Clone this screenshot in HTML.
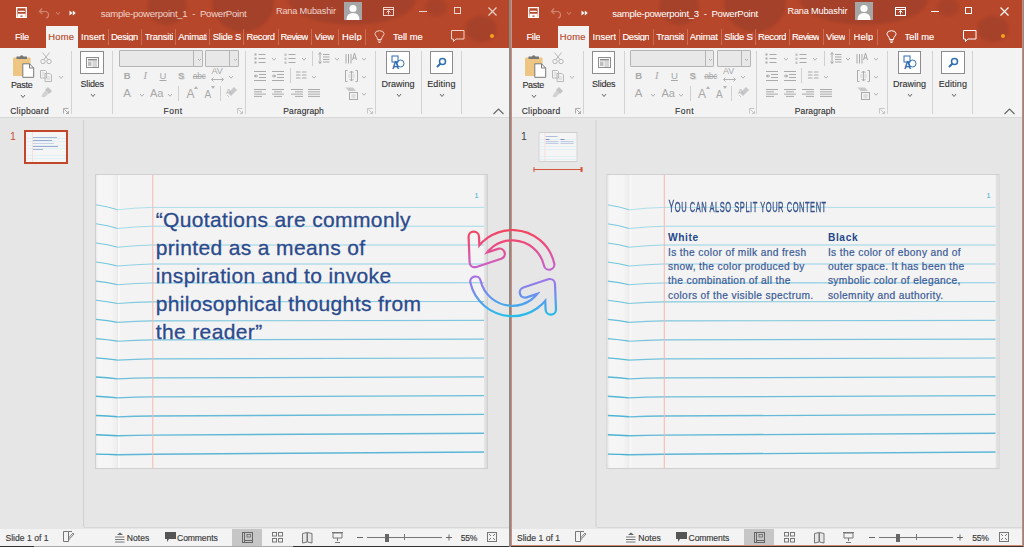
<!DOCTYPE html><html><head><meta charset="utf-8"><style>
*{margin:0;padding:0;box-sizing:border-box}
html,body{width:1024px;height:547px;overflow:hidden;background:#2f3430;position:relative;font-family:"Liberation Sans",sans-serif}
.win{position:absolute;top:0;height:546px;overflow:hidden;background:#e6e6e6}
.a{position:absolute;overflow:visible}
.bar{position:absolute}
.t{position:absolute;white-space:nowrap;line-height:1}
.tb{position:absolute;left:0;top:0;width:100%;height:48px;background:#b7472a;overflow:hidden}
.blob{position:absolute;background:#a1402a;filter:blur(1.5px)}
.ttl{font-size:10px;letter-spacing:-0.1px}
.avatar{position:absolute;left:343.8px;top:2px;width:18px;height:18px;background:#a6a6a6;overflow:hidden}
.avatar svg{position:absolute;left:0;top:0}
.hometab{position:absolute;left:46px;top:25.5px;width:31.5px;height:23px;background:#f3f3f3}
.tab{color:#fff;overflow:hidden;-webkit-text-stroke:0.15px #fff}
.tab.home{color:#b7472a;-webkit-text-stroke:0.15px #b7472a}
.tsep{position:absolute;top:28.5px;width:1px;height:16px;background:#c96c52}
.rb{position:absolute;left:0;top:48px;width:100%;height:69px;background:#f3f3f3}
.rb>*{margin-top:-48px}
.rl{color:#2e2e2e;-webkit-text-stroke:0.1px #2e2e2e}
.ic{font-size:11px;color:#a8a8a8}
.gsep{position:absolute;top:51px;width:1px;height:63px;background:#d3d3d3}
.ibox{position:absolute;background:#fff;border:1px solid #8c8c8c}
.fbox{position:absolute;background:#e8e8e8;border:1px solid #b5b5b5;border-radius:1px}
.ws{position:absolute;left:0;top:117px;width:100%;height:412px;background:#e6e6e6}
.ws>*{margin-top:-117px}
.psep{position:absolute;left:83px;top:120px;width:1px;height:407px;background:#d0d0d0}
.wsb{position:absolute;left:84px;top:527px;width:100%;height:1px;background:#d8d8d8}
.sb{position:absolute;left:0;top:529px;width:100%;height:17px;background:#f3f3f3}
.sb>*{margin-top:-529px}
.st{color:#3a3a3a;-webkit-text-stroke:0.15px #3a3a3a}
.slide{position:absolute;background:#f3f3f3;overflow:hidden;box-shadow:0 0 0 1px #d0d0d0}
.fold{position:absolute;left:0;top:0;width:22px;height:100%;background:linear-gradient(90deg,#ebebeb,#f6f6f6 12%,#f5f5f5 70%,#ededed 96%,#e6e6e6)}
.foldr{position:absolute;left:22px;top:0;width:2px;height:100%;background:#f8f8f8}
.redge{position:absolute;right:0;top:0;width:3px;height:100%;background:linear-gradient(90deg,#e8e8e8,#d9d9d9)}
.snum{font-size:7px;color:#74bfd8;font-weight:bold}
.q{color:#2b4a8c;-webkit-text-stroke:0.3px #2b4a8c}
.h2t{color:#34528a;transform:scaleX(0.5);transform-origin:0 0;-webkit-text-stroke:0.35px #34528a}
.col{color:#3a5a96;-webkit-text-stroke:0.2px #3a5a96}
.colh{color:#23478c;font-weight:bold}
.thumb1{position:absolute;left:24px;top:130px;width:43.5px;height:34px;border:2px solid #c2472a;background:#f5f5f5}
.thumb2{position:absolute;left:26px;top:132px;width:39px;height:30px;border:1px solid #cfcfcf;background:#f5f5f5}
.tin{position:absolute;left:0;top:0;width:100%;height:100%;background:repeating-linear-gradient(180deg,transparent 0 2.6px,#e0f0f4 2.6px 3.4px)}
.insline{position:absolute;left:21px;top:169px;width:49px;height:1.3px;background:#d4553a}
.insline:before,.insline:after{content:"";position:absolute;top:-2px;width:1.3px;height:5px;background:#d4553a}
.insline:before{left:0}.insline:after{right:0}
.pnum{font-size:10.5px}
</style></head><body>
<div class="win" style="left:0px;width:509px">
<div class="tb">
<div class="blob" style="left:147px;top:-13px;width:40px;height:38px;border-radius:50%;opacity:0.75"></div>
<div class="blob" style="left:212px;top:-28px;width:62px;height:60px;border-radius:50%;opacity:0.85"></div>
<div class="blob" style="left:288px;top:-25px;width:128px;height:50px;border-radius:50%;opacity:0.8"></div>
<div class="blob" style="left:425px;top:-3px;width:22px;height:20px;border-radius:50%;opacity:0.6"></div>
<div class="blob" style="left:465px;top:16px;width:32px;height:26px;border-radius:50%;opacity:0.75"></div>
<svg class="a" style="left:16.3px;top:7.4px" width="11" height="11"><path d="M0.7 0.7 H10.3 V10.3 H0.7 Z M2.2 4.3 H8.8" fill="none" stroke="#fff" stroke-width="1.3"/><path d="M1.5 6.8 H9.5 V10 H6.6 V8.4 H4.4 V10 H1.5 Z" fill="#fff"/></svg>
<svg class="a" style="left:38px;top:7px" width="12" height="12"><path d="M4 1.5 L1.5 4.5 L4.5 7 M1.8 4.5 H7 Q10.5 4.5 10.5 8 Q10.5 10.5 8 11" fill="none" stroke="rgba(255,255,255,.35)" stroke-width="1.2"/></svg>
<svg class="a" style="left:54.5px;top:11px" width="6" height="4.5"><path d="M1 1 L3.0 3.5 L5 1" fill="none" stroke="rgba(255,255,255,.35)" stroke-width="1"/></svg>
<svg class="a" style="left:69px;top:10px" width="8" height="6"><path d="M0.5 0.5 L3.5 3 L0.5 5.5 Z M3.8 0.5 L6.8 3 L3.8 5.5 Z" fill="#fff"/></svg>
<div id="w0_0" class="t ttl" style="left:100.70px;top:8.67px;font-size:9.6px;letter-spacing:-0.262px;color:#f0d3ca">sample-powerpoint_1&nbsp; - &nbsp;PowerPoint</div>
<div id="w0_1" class="t ttl" style="left:276.00px;top:7.01px;font-size:9.2px;letter-spacing:-0.192px;color:#f0d3ca">Rana Mubashir</div>
<div class="avatar"><svg width="18" height="18"><circle cx="9" cy="6.5" r="3.6" fill="#fff"/><path d="M2.5 18 Q2.5 11 9 11 Q15.5 11 15.5 18 Z" fill="#fff"/></svg></div>
<svg class="a" style="left:383px;top:7px" width="11" height="9"><rect x="0.5" y="0.5" width="10" height="8" fill="none" stroke="#f0d3ca" stroke-width="1"/><path d="M0.5 2.5 H10.5 M5.5 7.5 V3.5 M3.5 5.5 L5.5 3.5 L7.5 5.5" fill="none" stroke="#f0d3ca" stroke-width="1"/></svg>
<div class="bar" style="left:419px;top:11px;width:8px;height:1px;background:#f0d3ca"></div>
<div class="bar" style="left:453.5px;top:7px;width:7px;height:7px;border:1px solid #f0d3ca"></div>
<svg class="a" style="left:488px;top:7px" width="9" height="9"><path d="M0.5 0.5 L8.5 8.5 M8.5 0.5 L0.5 8.5" stroke="#f0d3ca" stroke-width="1.1"/></svg>
<div class="hometab"></div>
<div id="w0_2" class="t tab" style="left:14.90px;top:31.94px;font-size:9.4px;letter-spacing:-0.270px;">File</div>
<div id="w0_3" class="t tab home" style="left:48.20px;top:31.94px;font-size:9.4px;letter-spacing:0.295px;">Home</div>
<div id="w0_4" class="t tab" style="left:81.10px;top:31.94px;font-size:9.4px;letter-spacing:0.009px;">Insert</div>
<div id="w0_5" class="t tab" style="left:110.90px;top:31.94px;font-size:9.4px;letter-spacing:-0.358px;">Design</div>
<div id="w0_6" class="t tab" style="left:144.70px;top:31.94px;font-size:9.4px;letter-spacing:-0.210px;width:28.3px">Transitions</div>
<div id="w0_7" class="t tab" style="left:178.30px;top:31.94px;font-size:9.4px;letter-spacing:-0.210px;width:28.6px">Animations</div>
<div id="w0_8" class="t tab" style="left:212.80px;top:31.94px;font-size:9.4px;letter-spacing:-0.210px;width:28.3px">Slide Show</div>
<div id="w0_9" class="t tab" style="left:246.60px;top:31.94px;font-size:9.4px;letter-spacing:-0.367px;">Record</div>
<div id="w0_10" class="t tab" style="left:280.60px;top:31.94px;font-size:9.4px;letter-spacing:-0.590px;">Review</div>
<div id="w0_11" class="t tab" style="left:314.60px;top:31.94px;font-size:9.4px;letter-spacing:-0.219px;">View</div>
<div id="w0_12" class="t tab" style="left:342.10px;top:31.94px;font-size:9.4px;letter-spacing:0.135px;">Help</div>
<div id="w0_13" class="t tab" style="left:393.10px;top:31.94px;font-size:9.4px;letter-spacing:-0.017px;">Tell me</div>
<div class="tsep" style="left:107.5px"></div>
<div class="tsep" style="left:141.3px"></div>
<div class="tsep" style="left:175.0px"></div>
<div class="tsep" style="left:209.0px"></div>
<div class="tsep" style="left:243.2px"></div>
<div class="tsep" style="left:277.5px"></div>
<div class="tsep" style="left:311.2px"></div>
<div class="tsep" style="left:337.9px"></div>
<div class="tsep" style="left:365.1px"></div>
<svg class="a" style="left:374px;top:30px" width="11" height="13"><path d="M3.5 9.5 Q3.5 7.5 2 6 Q0.8 4.6 1 3.5 Q1.5 0.7 5.5 0.7 Q9.5 0.7 10 3.5 Q10.2 4.6 9 6 Q7.5 7.5 7.5 9.5 Z M3.8 11 H7.2 M4.5 12.5 H6.5" fill="none" stroke="#f0d3ca" stroke-width="1"/></svg>
<svg class="a" style="left:451px;top:30px" width="14" height="13"><path d="M0.5 0.5 H13 V9 H5 L2.5 11.5 V9 H0.5 Z" fill="none" stroke="#f0d3ca" stroke-width="1"/></svg>
<div class="bar" style="left:489.5px;top:33.5px;width:4px;height:4px;border-radius:2px;background:#f7a21b"></div>
</div>
<div class="rb">
<svg class="a" style="left:12px;top:53px" width="24" height="25"><rect x="1" y="4.5" width="17.5" height="18.5" rx="1" fill="#ecc682"/><path d="M4.5 6 H15 V3.5 H11.5 Q9.75 0.8 8 3.5 H4.5 Z" fill="#767676"/><path d="M10.8 10.8 H17.5 L21.7 15 V24.3 H10.8 Z" fill="#fff" stroke="#7a7a7a" stroke-width="1"/><path d="M17.5 10.8 V15 H21.7" fill="none" stroke="#7a7a7a" stroke-width="1"/></svg>
<div id="w0_14" class="t rl" style="left:10.90px;top:80.58px;font-size:9.0px;letter-spacing:-0.304px;">Paste</div>
<svg class="a" style="left:19.5px;top:93.5px" width="6" height="4.5"><path d="M1 1 L3.0 3.5 L5 1" fill="none" stroke="#666" stroke-width="1"/></svg>
<svg class="a" style="left:40px;top:52px" width="12" height="13"><circle cx="3" cy="9.5" r="2.2" fill="none" stroke="#b8b8b8" stroke-width="1"/><circle cx="9" cy="9.5" r="2.2" fill="none" stroke="#b8b8b8" stroke-width="1"/><path d="M4 7.5 L9.5 0.5 M8 7.5 L2.5 0.5" stroke="#b8b8b8" stroke-width="1"/></svg>
<svg class="a" style="left:40px;top:70px" width="12" height="12"><path d="M0.5 0.5 H5.5 L6.5 1.5 V8 H0.5 Z M5 3.5 H10 L11.5 5 V11.5 H5 Z" fill="#f3f3f3" stroke="#b8b8b8" stroke-width="1"/><path d="M2 3 H4.5 M2 5 H4.5 M6.5 7 H10 M6.5 9 H10" stroke="#c8c8c8" stroke-width=".8"/></svg>
<svg class="a" style="left:57.5px;top:75px" width="6" height="4.5"><path d="M1 1 L3.0 3.5 L5 1" fill="none" stroke="#b8b8b8" stroke-width="1"/></svg>
<svg class="a" style="left:40.5px;top:86px" width="12" height="12"><path d="M7 1 L11 5 L8 8 L4 4 Z" fill="#c4c4c4"/><path d="M4.5 4.5 L7.5 7.5 L4 11 Q2 11.5 0.5 10.5 Q1 8 4.5 4.5" fill="#d2d2d2"/></svg>
<div id="w0_15" class="t rl" style="left:10.20px;top:106.80px;font-size:8.5px;letter-spacing:0.264px;">Clipboard</div>
<svg class="a" style="left:63px;top:107.5px" width="6" height="6"><path d="M0.5 5.5 V0.5 H5.5 M1.5 1.5 L5.5 5.5 M3 5.5 H5.5 V3" fill="none" stroke="#999" stroke-width=".8"/></svg>
<div class="gsep" style="left:71.2px"></div>
<div class="gsep" style="left:112.1px"></div>
<div class="gsep" style="left:244.8px"></div>
<div class="gsep" style="left:375.1px"></div>
<div class="gsep" style="left:420.7px"></div>
<div class="gsep" style="left:460.9px"></div>
<div class="ibox" style="left:80.2px;top:51px;width:23.7px;height:23.4px"></div>
<svg class="a" style="left:86px;top:57px" width="13" height="11"><rect x="0.5" y="0.5" width="12" height="10" fill="#fafafa" stroke="#8c8c8c" stroke-width="1"/><rect x="2" y="2" width="9" height="1.5" fill="#8c8c8c"/><rect x="2" y="4.5" width="3.5" height="4.5" fill="#bdbdbd"/><path d="M6.5 5 H11 M6.5 7 H11 M6.5 9 H11" stroke="#a0a0a0" stroke-width=".8"/></svg>
<div id="w0_16" class="t rl" style="left:80.60px;top:80.18px;font-size:9.0px;letter-spacing:-0.223px;">Slides</div>
<svg class="a" style="left:89.5px;top:92.7px" width="6" height="4.5"><path d="M1 1 L3.0 3.5 L5 1" fill="none" stroke="#666" stroke-width="1"/></svg>
<div class="fbox" style="left:118.8px;top:50px;width:84px;height:16.5px"></div>
<div class="bar" style="left:193px;top:50.5px;width:1px;height:16px;background:#b5b5b5"></div>
<div class="fbox" style="left:205px;top:50px;width:34px;height:16.5px"></div>
<div class="bar" style="left:229.2px;top:50.5px;width:1px;height:16px;background:#b5b5b5"></div>
<svg class="a" style="left:196.5px;top:58px" width="5" height="3.5"><path d="M1 1 L2.5 2.5 L4 1" fill="none" stroke="#b0b0b0" stroke-width="1"/></svg>
<svg class="a" style="left:232.5px;top:58px" width="5" height="3.5"><path d="M1 1 L2.5 2.5 L4 1" fill="none" stroke="#b0b0b0" stroke-width="1"/></svg>
<div class="t ic" style="left:123.8px;top:71.2px;font-weight:bold;font-size:9.5px">B</div>
<div class="t ic" style="left:143.5px;top:70.6px;font-style:italic;font-family:'Liberation Serif',serif;font-size:10.5px">I</div>
<div class="t ic" style="left:159.5px;top:71.2px;text-decoration:underline;font-size:9.5px">U</div>
<div class="t ic" style="left:178px;top:71.2px;font-weight:bold;text-shadow:1px 1px 0 #ddd;font-size:9.5px">S</div>
<div class="t ic" style="left:192.8px;top:72.2px;font-size:8.5px;text-decoration:line-through;letter-spacing:-0.3px">abc</div>
<div class="t ic" style="left:211.5px;top:67px;font-size:9px">AV</div>
<svg class="a" style="left:211px;top:77px" width="13" height="5"><path d="M0.5 2.5 H12.5 M2.5 0.5 L0.5 2.5 L2.5 4.5 M10.5 0.5 L12.5 2.5 L10.5 4.5" fill="none" stroke="#b3b3b3" stroke-width="1"/></svg>
<svg class="a" style="left:228px;top:75px" width="6" height="4.2"><path d="M1 1 L3.0 3.2 L5 1" fill="none" stroke="#b3b3b3" stroke-width="1"/></svg>
<div class="t ic" style="left:123.3px;top:88.3px;font-size:11.5px">A</div>
<svg class="a" style="left:138.5px;top:92.5px" width="6" height="4.2"><path d="M1 1 L3.0 3.2 L5 1" fill="none" stroke="#b3b3b3" stroke-width="1"/></svg>
<div class="t ic" style="left:150px;top:87.5px;font-size:11px">Aa</div>
<svg class="a" style="left:166.5px;top:92.5px" width="6" height="4.2"><path d="M1 1 L3.0 3.2 L5 1" fill="none" stroke="#b3b3b3" stroke-width="1"/></svg>
<div class="bar" style="left:178.3px;top:86px;width:1px;height:15px;background:#d0d0d0"></div>
<div class="t ic" style="left:186.5px;top:88px;font-size:12px">A</div>
<div class="t ic" style="left:204.5px;top:89.5px;font-size:10px">A</div>
<svg class="a" style="left:194px;top:86px" width="4" height="3"><path d="M0 3 L2 0 L4 3Z" fill="#b3b3b3"/></svg>
<svg class="a" style="left:211px;top:86px" width="4" height="3"><path d="M0 0 L2 3 L4 0Z" fill="#b3b3b3"/></svg>
<div class="bar" style="left:219.5px;top:86px;width:1px;height:15px;background:#d0d0d0"></div>
<svg class="a" style="left:226px;top:86px" width="12" height="12"><path d="M5 10 L11 4 L8 1 L2 7 Z" fill="#c8c8c8"/><path d="M1 9 L3 11" stroke="#c8c8c8"/><text x="0" y="8" font-size="8" fill="#b8b8b8" font-family="Liberation Sans">A</text></svg>
<div id="w0_17" class="t rl" style="left:163.40px;top:106.80px;font-size:8.5px;letter-spacing:0.561px;">Font</div>
<svg class="a" style="left:237px;top:107.5px" width="6" height="6"><path d="M0.5 5.5 V0.5 H5.5 M1.5 1.5 L5.5 5.5 M3 5.5 H5.5 V3" fill="none" stroke="#bbb" stroke-width=".8"/></svg>
<svg class="a" style="left:253.9px;top:52.5px" width="12" height="12"><rect x="0.5" y="0.5" width="2" height="2" fill="#aaa"/><rect x="4.5" y="1.0" width="7" height="1" fill="#aaa"/><rect x="0.5" y="4.5" width="2" height="2" fill="#aaa"/><rect x="4.5" y="5.0" width="7" height="1" fill="#aaa"/><rect x="0.5" y="8.5" width="2" height="2" fill="#aaa"/><rect x="4.5" y="9.0" width="7" height="1" fill="#aaa"/></svg>
<svg class="a" style="left:271px;top:57px" width="6" height="4.2"><path d="M1 1 L3.0 3.2 L5 1" fill="none" stroke="#b3b3b3" stroke-width="1"/></svg>
<svg class="a" style="left:283.9px;top:52.5px" width="12" height="12"><rect x="0.5" y="0.5" width="2" height="2.5" fill="#c4c4c4"/><rect x="4.5" y="1.0" width="7" height="1" fill="#aaa"/><rect x="0.5" y="4.5" width="2" height="2.5" fill="#c4c4c4"/><rect x="4.5" y="5.0" width="7" height="1" fill="#aaa"/><rect x="0.5" y="8.5" width="2" height="2.5" fill="#c4c4c4"/><rect x="4.5" y="9.0" width="7" height="1" fill="#aaa"/></svg>
<svg class="a" style="left:300.5px;top:57px" width="6" height="4.2"><path d="M1 1 L3.0 3.2 L5 1" fill="none" stroke="#b3b3b3" stroke-width="1"/></svg>
<div class="bar" style="left:312px;top:51px;width:1px;height:15px;background:#d0d0d0"></div>
<svg class="a" style="left:318px;top:52px" width="12" height="12"><path d="M2 0.5 V11.5 M0.5 2.5 L2 0.5 L3.5 2.5 M0.5 9.5 L2 11.5 L3.5 9.5 M5 2.5 H11.5 M5 5 H11.5 M5 7.5 H11.5 M5 10 H11.5" fill="none" stroke="#aaa" stroke-width="1"/></svg>
<svg class="a" style="left:333.5px;top:57px" width="6" height="4.2"><path d="M1 1 L3.0 3.2 L5 1" fill="none" stroke="#b3b3b3" stroke-width="1"/></svg>
<svg class="a" style="left:344.5px;top:52px" width="12" height="12"><path d="M1 2 V11.5 M3.5 2 V11.5 M6 2 V11.5 M7.5 8 L9.5 1 L11.5 8 M8 6 H11" fill="none" stroke="#aaa" stroke-width="1"/></svg>
<svg class="a" style="left:361px;top:57px" width="6" height="4.2"><path d="M1 1 L3.0 3.2 L5 1" fill="none" stroke="#b3b3b3" stroke-width="1"/></svg>
<svg class="a" style="left:254px;top:70.5px" width="12" height="11"><path d="M0 0.5 H12 M5 3.5 H12 M5 6.5 H12 M0 9.5 H12" stroke="#aaa" stroke-width="1"/><path d="M0.5 5 H4 M2 3.5 L0.5 5 L2 6.5" fill="none" stroke="#999" stroke-width="1"/></svg>
<svg class="a" style="left:272px;top:70.5px" width="12" height="11"><path d="M0 0.5 H12 M5 3.5 H12 M5 6.5 H12 M0 9.5 H12" stroke="#aaa" stroke-width="1"/><path d="M0 5 H3.5 M2 3.5 L3.5 5 L2 6.5" fill="none" stroke="#999" stroke-width="1"/></svg>
<div class="bar" style="left:289.5px;top:68px;width:1px;height:15px;background:#d0d0d0"></div>
<svg class="a" style="left:296px;top:71px" width="11" height="9"><path d="M0 1 H4.5 M0 4 H4.5 M0 7 H4.5 M6 1 H10.5 M6 4 H10.5 M6 7 H10.5" stroke="#aaa" stroke-width="1"/></svg>
<svg class="a" style="left:311px;top:75px" width="6" height="4.2"><path d="M1 1 L3.0 3.2 L5 1" fill="none" stroke="#b3b3b3" stroke-width="1"/></svg>
<svg class="a" style="left:345px;top:70px" width="13" height="12"><path d="M2.5 0.5 H0.5 V11.5 H2.5 M10.5 0.5 H12.5 V11.5 H10.5 M6.5 1 V11 M4.5 3 L6.5 1 L8.5 3 M4.5 9 L6.5 11 L8.5 9" fill="none" stroke="#aaa" stroke-width="1"/><path d="M3 5 H10 M3 7 H10" stroke="#ccc" stroke-width=".8"/></svg>
<svg class="a" style="left:361px;top:75px" width="6" height="4.2"><path d="M1 1 L3.0 3.2 L5 1" fill="none" stroke="#b3b3b3" stroke-width="1"/></svg>
<svg class="a" style="left:254px;top:88.5px" width="12" height="9"><rect x="0" y="0.0" width="12" height="1" fill="#aaa"/><rect x="0" y="2.3" width="8" height="1" fill="#aaa"/><rect x="0" y="4.6" width="12" height="1" fill="#aaa"/><rect x="0" y="6.9" width="8" height="1" fill="#aaa"/></svg>
<svg class="a" style="left:272px;top:88.5px" width="12" height="9"><rect x="0" y="0.0" width="12" height="1" fill="#aaa"/><rect x="2" y="2.3" width="8" height="1" fill="#aaa"/><rect x="0" y="4.6" width="12" height="1" fill="#aaa"/><rect x="2" y="6.9" width="8" height="1" fill="#aaa"/></svg>
<svg class="a" style="left:290.5px;top:88.5px" width="12" height="9"><rect x="0" y="0.0" width="12" height="1" fill="#aaa"/><rect x="4" y="2.3" width="8" height="1" fill="#aaa"/><rect x="0" y="4.6" width="12" height="1" fill="#aaa"/><rect x="4" y="6.9" width="8" height="1" fill="#aaa"/></svg>
<svg class="a" style="left:308px;top:88.5px" width="12" height="9"><rect x="0" y="0.0" width="12" height="1" fill="#aaa"/><rect x="0" y="2.3" width="12" height="1" fill="#aaa"/><rect x="0" y="4.6" width="12" height="1" fill="#aaa"/><rect x="0" y="6.9" width="12" height="1" fill="#aaa"/></svg>
<svg class="a" style="left:345px;top:87px" width="13" height="13"><path d="M0.5 0.5 H8 L11 4 H3.5 Z" fill="#c8c8c8"/><rect x="4.5" y="5.5" width="8" height="7" fill="#f3f3f3" stroke="#aaa" stroke-width="1"/><path d="M6.5 8 H10.5 M6.5 10 H10.5" stroke="#bbb" stroke-width=".8"/></svg>
<svg class="a" style="left:361px;top:92px" width="6" height="4.2"><path d="M1 1 L3.0 3.2 L5 1" fill="none" stroke="#b3b3b3" stroke-width="1"/></svg>
<div id="w0_18" class="t rl" style="left:283.30px;top:106.80px;font-size:8.5px;letter-spacing:0.099px;">Paragraph</div>
<svg class="a" style="left:367px;top:107.5px" width="6" height="6"><path d="M0.5 5.5 V0.5 H5.5 M1.5 1.5 L5.5 5.5 M3 5.5 H5.5 V3" fill="none" stroke="#bbb" stroke-width=".8"/></svg>
<div class="ibox" style="left:386.1px;top:51px;width:23.7px;height:23.4px"></div>
<svg class="a" style="left:391px;top:55px" width="14" height="14"><rect x="1" y="1" width="6" height="6" fill="none" stroke="#2f6db5" stroke-width="1"/><circle cx="9.5" cy="8.5" r="3.5" fill="none" stroke="#2f6db5" stroke-width="1"/><text x="1" y="13.5" font-size="10" font-weight="bold" fill="#2f6db5" font-family="Liberation Sans">A</text></svg>
<div id="w0_19" class="t rl" style="left:381.40px;top:79.98px;font-size:9.0px;letter-spacing:0.031px;">Drawing</div>
<svg class="a" style="left:395.5px;top:92.7px" width="6" height="4.5"><path d="M1 1 L3.0 3.5 L5 1" fill="none" stroke="#666" stroke-width="1"/></svg>
<div class="ibox" style="left:429.7px;top:51px;width:23.7px;height:23.4px"></div>
<svg class="a" style="left:436px;top:57px" width="11" height="11"><circle cx="6.5" cy="4.5" r="3" fill="none" stroke="#2f6db5" stroke-width="1.5"/><path d="M4.5 6.5 L1 10" stroke="#2f6db5" stroke-width="2"/></svg>
<div id="w0_20" class="t rl" style="left:427.20px;top:79.98px;font-size:9.0px;letter-spacing:0.129px;">Editing</div>
<svg class="a" style="left:439px;top:92.7px" width="6" height="4.5"><path d="M1 1 L3.0 3.5 L5 1" fill="none" stroke="#666" stroke-width="1"/></svg>
<svg class="a" style="left:492.5px;top:107.5px" width="11" height="7"><path d="M0.5 6 L5.5 1 L10.5 6" fill="none" stroke="#666" stroke-width="1.1"/></svg>
</div>
<div class="ws" style="transform:translateX(0px)">
<div class="bar" style="left:0;top:117px;width:100%;height:1px;background:#d8d8d8"></div><div class="psep"></div>
<div class="thumb1"><div class="tin">
<div style="position:absolute;left:7px;top:5px;width:24px;height:1px;background:#8a9ccc;opacity:.75"></div>
<div style="position:absolute;left:7px;top:8px;width:19px;height:1px;background:#7d90c4;opacity:.75"></div>
<div style="position:absolute;left:7px;top:11px;width:21px;height:1px;background:#b8c6e4;opacity:.75"></div>
<div style="position:absolute;left:7px;top:14px;width:25px;height:1px;background:#7d90c4;opacity:.75"></div>
<div style="position:absolute;left:7px;top:17px;width:10px;height:1px;background:#8a9ccc;opacity:.75"></div>
<div style="position:absolute;left:5.5px;top:0;width:1px;height:100%;background:#f6e0dc"></div>
</div></div><div class="t pnum" style="left:10px;top:131px;color:#c9502f">1</div>
<div class="slide" style="left:95.5px;top:175.0px;width:391px;height:293px">
<div class="fold"></div><div class="foldr"></div>
<svg style="position:absolute;left:0;top:0" width="391" height="293"><path d="M0 29.80 Q11.94 31.55 21.70 34.80" fill="none" stroke="rgb(125,204,224)" stroke-width="1.00"/><path d="M21.70 34.80 Q39.70 32.76 55.70 32.40 L391 32.40" fill="none" stroke="rgb(172,222,234)" stroke-width="0.95"/><path d="M0 48.84 Q11.94 50.48 21.70 53.51" fill="none" stroke="rgb(120,201,222)" stroke-width="1.03"/><path d="M21.70 53.51 Q39.70 51.59 55.70 51.25 L391 51.24" fill="none" stroke="rgb(160,216,230)" stroke-width="0.98"/><path d="M0 67.91 Q11.94 69.42 21.70 72.23" fill="none" stroke="rgb(116,199,221)" stroke-width="1.07"/><path d="M21.70 72.23 Q39.70 70.44 55.70 70.12 L391 70.07" fill="none" stroke="rgb(152,212,228)" stroke-width="1.01"/><path d="M0 87.00 Q11.94 88.39 21.70 90.98" fill="none" stroke="rgb(112,197,220)" stroke-width="1.10"/><path d="M21.70 90.98 Q39.70 89.31 55.70 89.02 L391 88.90" fill="none" stroke="rgb(145,208,227)" stroke-width="1.04"/><path d="M0 106.11 Q11.94 107.38 21.70 109.75" fill="none" stroke="rgb(108,195,219)" stroke-width="1.14"/><path d="M21.70 109.75 Q39.70 108.21 55.70 107.94 L391 107.73" fill="none" stroke="rgb(138,205,225)" stroke-width="1.07"/><path d="M0 125.24 Q11.94 126.40 21.70 128.55" fill="none" stroke="rgb(103,193,218)" stroke-width="1.17"/><path d="M21.70 128.55 Q39.70 127.13 55.70 126.88 L391 126.55" fill="none" stroke="rgb(132,202,223)" stroke-width="1.10"/><path d="M0 144.40 Q11.94 145.44 21.70 147.37" fill="none" stroke="rgb(99,191,217)" stroke-width="1.21"/><path d="M21.70 147.37 Q39.70 146.07 55.70 145.84 L391 145.37" fill="none" stroke="rgb(127,199,222)" stroke-width="1.13"/><path d="M0 163.57 Q11.94 164.50 21.70 166.21" fill="none" stroke="rgb(95,188,216)" stroke-width="1.24"/><path d="M21.70 166.21 Q39.70 165.04 55.70 164.83 L391 164.19" fill="none" stroke="rgb(121,196,220)" stroke-width="1.17"/><path d="M0 182.77 Q11.94 183.58 21.70 185.07" fill="none" stroke="rgb(91,186,215)" stroke-width="1.28"/><path d="M21.70 185.07 Q39.70 184.02 55.70 183.84 L391 183.00" fill="none" stroke="rgb(116,194,219)" stroke-width="1.20"/><path d="M0 202.00 Q11.94 202.68 21.70 203.95" fill="none" stroke="rgb(86,184,214)" stroke-width="1.31"/><path d="M21.70 203.95 Q39.70 203.03 55.70 202.87 L391 201.81" fill="none" stroke="rgb(111,191,218)" stroke-width="1.23"/><path d="M0 221.24 Q11.94 221.81 21.70 222.86" fill="none" stroke="rgb(82,182,213)" stroke-width="1.35"/><path d="M21.70 222.86 Q39.70 222.06 55.70 221.92 L391 220.62" fill="none" stroke="rgb(106,189,216)" stroke-width="1.26"/><path d="M0 240.51 Q11.94 240.96 21.70 241.79" fill="none" stroke="rgb(78,180,212)" stroke-width="1.38"/><path d="M21.70 241.79 Q39.70 241.11 55.70 240.99 L391 239.42" fill="none" stroke="rgb(101,186,215)" stroke-width="1.29"/><path d="M0 259.80 Q11.94 260.13 21.70 260.74" fill="none" stroke="rgb(74,178,211)" stroke-width="1.42"/><path d="M21.70 260.74 Q39.70 260.19 55.70 260.09 L391 258.22" fill="none" stroke="rgb(96,184,214)" stroke-width="1.32"/><path d="M0 279.11 Q11.94 279.32 21.70 279.71" fill="none" stroke="rgb(70,176,210)" stroke-width="1.45"/><path d="M21.70 279.71 Q39.70 279.29 55.70 279.21 L391 277.01" fill="none" stroke="rgb(92,182,213)" stroke-width="1.35"/>
<line x1="56.8" y1="0" x2="56.8" y2="293" stroke="#f5b8b2" stroke-width="1"/></svg>
<div class="redge"></div>
<div class="t snum" style="left:379px;top:17.3px">1</div>
<div id="w0_21" class="t q" style="left:60.20px;top:34.02px;font-size:21.0px;letter-spacing:0.371px;">“Quotations are commonly</div><div id="w0_22" class="t q" style="left:60.20px;top:62.02px;font-size:21.0px;letter-spacing:0.373px;">printed as a means of</div><div id="w0_23" class="t q" style="left:60.20px;top:90.02px;font-size:21.0px;letter-spacing:0.373px;">inspiration and to invoke</div><div id="w0_24" class="t q" style="left:60.20px;top:118.02px;font-size:21.0px;letter-spacing:0.375px;">philosophical thoughts from</div><div id="w0_25" class="t q" style="left:60.20px;top:146.02px;font-size:21.0px;letter-spacing:0.373px;">the reader”</div>
</div>
<div class="wsb"></div>
</div>
<div class="sb">
<div id="w0_26" class="t st" style="left:5.40px;top:533.62px;font-size:8.6px;letter-spacing:0.018px;">Slide 1 of 1</div>
<svg class="a" style="left:63px;top:531px" width="12" height="12"><path d="M0.5 0.5 H5.5 V10.5 H0.5 Z M5.5 0.5 H9" fill="none" stroke="#777" stroke-width="1"/><path d="M5.5 9 L11 3 L10 2 L6 6.5 Z" fill="none" stroke="#777" stroke-width=".9"/></svg>
<svg class="a" style="left:114.8px;top:532px" width="10" height="11"><path d="M2 3 L5 0.5 L8 3 Z" fill="#666"/><path d="M0 5 H9.5 M0 7.5 H9.5 M0 10 H9.5" stroke="#777" stroke-width="1"/></svg>
<div id="w0_27" class="t st" style="left:126.70px;top:533.72px;font-size:8.6px;letter-spacing:0.062px;">Notes</div>
<svg class="a" style="left:164.5px;top:532px" width="11" height="10"><path d="M0 0 H11 V7 H4 L2 10 V7 H0 Z" fill="#555"/></svg>
<div id="w0_28" class="t st" style="left:177.10px;top:533.72px;font-size:8.6px;letter-spacing:-0.136px;">Comments</div>
<div class="bar" style="left:232px;top:529px;width:30px;height:16.5px;background:#c6c6c6"></div>
<svg class="a" style="left:242px;top:532px" width="11" height="11"><rect x="0.5" y="0.5" width="10" height="10" fill="none" stroke="#666" stroke-width="1"/><path d="M2.5 0.5 V10.5 M2.5 8.5 H10.5" stroke="#666" stroke-width="1"/><rect x="5" y="2.5" width="3.5" height="2.5" fill="none" stroke="#666" stroke-width=".8"/></svg>
<svg class="a" style="left:272px;top:532px" width="11" height="11"><rect x="0.5" y="0.5" width="4" height="3.5" fill="none" stroke="#777" stroke-width="1"/><rect x="6.5" y="0.5" width="4" height="3.5" fill="none" stroke="#777" stroke-width="1"/><rect x="0.5" y="6.5" width="4" height="3.5" fill="none" stroke="#777" stroke-width="1"/><rect x="6.5" y="6.5" width="4" height="3.5" fill="none" stroke="#777" stroke-width="1"/></svg>
<svg class="a" style="left:302px;top:532px" width="11" height="11"><path d="M0.5 1.5 L5 0.5 V10 L0.5 11 Z M5.5 0.5 L10 1.5 V11 L5.5 10 Z" fill="#e6e6e6" stroke="#777" stroke-width="1"/></svg>
<svg class="a" style="left:331.5px;top:532px" width="11" height="11"><path d="M0 0.5 H11 M1 1 H10 V6 H1 Z M5.5 6 V9 M3 10.5 H8" fill="none" stroke="#777" stroke-width="1"/></svg>
<div class="bar" style="left:357px;top:536.5px;width:6px;height:1px;background:#666"></div>
<div class="bar" style="left:367px;top:536.5px;width:74.5px;height:1px;background:#777"></div>
<div class="bar" style="left:404px;top:534px;width:1px;height:6px;background:#777"></div>
<div class="bar" style="left:384.5px;top:533.5px;width:4px;height:8px;background:#666"></div>
<svg class="a" style="left:445.5px;top:533.5px" width="7" height="7"><path d="M0 3.5 H6 M3 0.5 V6.5" stroke="#666" stroke-width="1"/></svg>
<div id="w0_29" class="t st" style="left:460.70px;top:533.72px;font-size:8.6px;letter-spacing:-0.303px;">55%</div>
<svg class="a" style="left:487px;top:532px" width="10" height="10"><rect x="0.5" y="0.5" width="9" height="9" fill="none" stroke="#777" stroke-width="1"/><path d="M2 2 L4 4 M8 2 L6 4 M2 8 L4 6 M8 8 L6 6" stroke="#777" stroke-width="1"/></svg>
</div>
</div>
<div class="bar" style="left:509px;top:0;width:2px;height:547px;background:#8a8a8a"></div>
<div class="bar" style="left:511px;top:0;width:1px;height:546px;background:#d98a73"></div>
<div class="win" style="left:511.5px;width:510.5px">
<div class="tb">
<div class="blob" style="left:147px;top:-13px;width:40px;height:38px;border-radius:50%;opacity:0.75"></div>
<div class="blob" style="left:212px;top:-28px;width:62px;height:60px;border-radius:50%;opacity:0.85"></div>
<div class="blob" style="left:288px;top:-25px;width:128px;height:50px;border-radius:50%;opacity:0.8"></div>
<div class="blob" style="left:425px;top:-3px;width:22px;height:20px;border-radius:50%;opacity:0.6"></div>
<div class="blob" style="left:465px;top:16px;width:32px;height:26px;border-radius:50%;opacity:0.75"></div>
<svg class="a" style="left:16.3px;top:7.4px" width="11" height="11"><path d="M0.7 0.7 H10.3 V10.3 H0.7 Z M2.2 4.3 H8.8" fill="none" stroke="#fff" stroke-width="1.3"/><path d="M1.5 6.8 H9.5 V10 H6.6 V8.4 H4.4 V10 H1.5 Z" fill="#fff"/></svg>
<svg class="a" style="left:38px;top:7px" width="12" height="12"><path d="M4 1.5 L1.5 4.5 L4.5 7 M1.8 4.5 H7 Q10.5 4.5 10.5 8 Q10.5 10.5 8 11" fill="none" stroke="rgba(255,255,255,.35)" stroke-width="1.2"/></svg>
<svg class="a" style="left:54.5px;top:11px" width="6" height="4.5"><path d="M1 1 L3.0 3.5 L5 1" fill="none" stroke="rgba(255,255,255,.35)" stroke-width="1"/></svg>
<svg class="a" style="left:69px;top:10px" width="8" height="6"><path d="M0.5 0.5 L3.5 3 L0.5 5.5 Z M3.8 0.5 L6.8 3 L3.8 5.5 Z" fill="#fff"/></svg>
<div id="w1_0" class="t ttl" style="left:100.70px;top:8.67px;font-size:9.6px;letter-spacing:-0.262px;color:#ffffff">sample-powerpoint_3&nbsp; - &nbsp;PowerPoint</div>
<div id="w1_1" class="t ttl" style="left:276.00px;top:7.01px;font-size:9.2px;letter-spacing:-0.192px;color:#ffffff">Rana Mubashir</div>
<div class="avatar"><svg width="18" height="18"><circle cx="9" cy="6.5" r="3.6" fill="#fff"/><path d="M2.5 18 Q2.5 11 9 11 Q15.5 11 15.5 18 Z" fill="#fff"/></svg></div>
<svg class="a" style="left:383px;top:7px" width="11" height="9"><rect x="0.5" y="0.5" width="10" height="8" fill="none" stroke="#ffffff" stroke-width="1"/><path d="M0.5 2.5 H10.5 M5.5 7.5 V3.5 M3.5 5.5 L5.5 3.5 L7.5 5.5" fill="none" stroke="#ffffff" stroke-width="1"/></svg>
<div class="bar" style="left:419px;top:11px;width:8px;height:1px;background:#ffffff"></div>
<div class="bar" style="left:453.5px;top:7px;width:7px;height:7px;border:1px solid #ffffff"></div>
<svg class="a" style="left:488px;top:7px" width="9" height="9"><path d="M0.5 0.5 L8.5 8.5 M8.5 0.5 L0.5 8.5" stroke="#ffffff" stroke-width="1.1"/></svg>
<div class="hometab"></div>
<div id="w1_2" class="t tab" style="left:14.90px;top:31.94px;font-size:9.4px;letter-spacing:-0.270px;">File</div>
<div id="w1_3" class="t tab home" style="left:48.20px;top:31.94px;font-size:9.4px;letter-spacing:0.295px;">Home</div>
<div id="w1_4" class="t tab" style="left:81.10px;top:31.94px;font-size:9.4px;letter-spacing:0.009px;">Insert</div>
<div id="w1_5" class="t tab" style="left:110.90px;top:31.94px;font-size:9.4px;letter-spacing:-0.358px;">Design</div>
<div id="w1_6" class="t tab" style="left:144.70px;top:31.94px;font-size:9.4px;letter-spacing:-0.210px;width:28.3px">Transitions</div>
<div id="w1_7" class="t tab" style="left:178.30px;top:31.94px;font-size:9.4px;letter-spacing:-0.210px;width:28.6px">Animations</div>
<div id="w1_8" class="t tab" style="left:212.80px;top:31.94px;font-size:9.4px;letter-spacing:-0.210px;width:28.3px">Slide Show</div>
<div id="w1_9" class="t tab" style="left:246.60px;top:31.94px;font-size:9.4px;letter-spacing:-0.367px;">Record</div>
<div id="w1_10" class="t tab" style="left:280.60px;top:31.94px;font-size:9.4px;letter-spacing:-0.590px;">Review</div>
<div id="w1_11" class="t tab" style="left:314.60px;top:31.94px;font-size:9.4px;letter-spacing:-0.219px;">View</div>
<div id="w1_12" class="t tab" style="left:342.10px;top:31.94px;font-size:9.4px;letter-spacing:0.135px;">Help</div>
<div id="w1_13" class="t tab" style="left:393.10px;top:31.94px;font-size:9.4px;letter-spacing:-0.017px;">Tell me</div>
<div class="tsep" style="left:107.5px"></div>
<div class="tsep" style="left:141.3px"></div>
<div class="tsep" style="left:175.0px"></div>
<div class="tsep" style="left:209.0px"></div>
<div class="tsep" style="left:243.2px"></div>
<div class="tsep" style="left:277.5px"></div>
<div class="tsep" style="left:311.2px"></div>
<div class="tsep" style="left:337.9px"></div>
<div class="tsep" style="left:365.1px"></div>
<svg class="a" style="left:374px;top:30px" width="11" height="13"><path d="M3.5 9.5 Q3.5 7.5 2 6 Q0.8 4.6 1 3.5 Q1.5 0.7 5.5 0.7 Q9.5 0.7 10 3.5 Q10.2 4.6 9 6 Q7.5 7.5 7.5 9.5 Z M3.8 11 H7.2 M4.5 12.5 H6.5" fill="none" stroke="#ffffff" stroke-width="1"/></svg>
<svg class="a" style="left:451px;top:30px" width="14" height="13"><path d="M0.5 0.5 H13 V9 H5 L2.5 11.5 V9 H0.5 Z" fill="none" stroke="#ffffff" stroke-width="1"/></svg>
<div class="bar" style="left:489.5px;top:33.5px;width:4px;height:4px;border-radius:2px;background:#f7a21b"></div>
</div>
<div class="rb">
<svg class="a" style="left:12px;top:53px" width="24" height="25"><rect x="1" y="4.5" width="17.5" height="18.5" rx="1" fill="#ecc682"/><path d="M4.5 6 H15 V3.5 H11.5 Q9.75 0.8 8 3.5 H4.5 Z" fill="#767676"/><path d="M10.8 10.8 H17.5 L21.7 15 V24.3 H10.8 Z" fill="#fff" stroke="#7a7a7a" stroke-width="1"/><path d="M17.5 10.8 V15 H21.7" fill="none" stroke="#7a7a7a" stroke-width="1"/></svg>
<div id="w1_14" class="t rl" style="left:10.90px;top:80.58px;font-size:9.0px;letter-spacing:-0.304px;">Paste</div>
<svg class="a" style="left:19.5px;top:93.5px" width="6" height="4.5"><path d="M1 1 L3.0 3.5 L5 1" fill="none" stroke="#666" stroke-width="1"/></svg>
<svg class="a" style="left:40px;top:52px" width="12" height="13"><circle cx="3" cy="9.5" r="2.2" fill="none" stroke="#b8b8b8" stroke-width="1"/><circle cx="9" cy="9.5" r="2.2" fill="none" stroke="#b8b8b8" stroke-width="1"/><path d="M4 7.5 L9.5 0.5 M8 7.5 L2.5 0.5" stroke="#b8b8b8" stroke-width="1"/></svg>
<svg class="a" style="left:40px;top:70px" width="12" height="12"><path d="M0.5 0.5 H5.5 L6.5 1.5 V8 H0.5 Z M5 3.5 H10 L11.5 5 V11.5 H5 Z" fill="#f3f3f3" stroke="#b8b8b8" stroke-width="1"/><path d="M2 3 H4.5 M2 5 H4.5 M6.5 7 H10 M6.5 9 H10" stroke="#c8c8c8" stroke-width=".8"/></svg>
<svg class="a" style="left:57.5px;top:75px" width="6" height="4.5"><path d="M1 1 L3.0 3.5 L5 1" fill="none" stroke="#b8b8b8" stroke-width="1"/></svg>
<svg class="a" style="left:40.5px;top:86px" width="12" height="12"><path d="M7 1 L11 5 L8 8 L4 4 Z" fill="#c4c4c4"/><path d="M4.5 4.5 L7.5 7.5 L4 11 Q2 11.5 0.5 10.5 Q1 8 4.5 4.5" fill="#d2d2d2"/></svg>
<div id="w1_15" class="t rl" style="left:10.20px;top:106.80px;font-size:8.5px;letter-spacing:0.264px;">Clipboard</div>
<svg class="a" style="left:63px;top:107.5px" width="6" height="6"><path d="M0.5 5.5 V0.5 H5.5 M1.5 1.5 L5.5 5.5 M3 5.5 H5.5 V3" fill="none" stroke="#999" stroke-width=".8"/></svg>
<div class="gsep" style="left:71.2px"></div>
<div class="gsep" style="left:112.1px"></div>
<div class="gsep" style="left:244.8px"></div>
<div class="gsep" style="left:375.1px"></div>
<div class="gsep" style="left:420.7px"></div>
<div class="gsep" style="left:460.9px"></div>
<div class="ibox" style="left:80.2px;top:51px;width:23.7px;height:23.4px"></div>
<svg class="a" style="left:86px;top:57px" width="13" height="11"><rect x="0.5" y="0.5" width="12" height="10" fill="#fafafa" stroke="#8c8c8c" stroke-width="1"/><rect x="2" y="2" width="9" height="1.5" fill="#8c8c8c"/><rect x="2" y="4.5" width="3.5" height="4.5" fill="#bdbdbd"/><path d="M6.5 5 H11 M6.5 7 H11 M6.5 9 H11" stroke="#a0a0a0" stroke-width=".8"/></svg>
<div id="w1_16" class="t rl" style="left:80.60px;top:80.18px;font-size:9.0px;letter-spacing:-0.223px;">Slides</div>
<svg class="a" style="left:89.5px;top:92.7px" width="6" height="4.5"><path d="M1 1 L3.0 3.5 L5 1" fill="none" stroke="#666" stroke-width="1"/></svg>
<div class="fbox" style="left:118.8px;top:50px;width:84px;height:16.5px"></div>
<div class="bar" style="left:193px;top:50.5px;width:1px;height:16px;background:#b5b5b5"></div>
<div class="fbox" style="left:205px;top:50px;width:34px;height:16.5px"></div>
<div class="bar" style="left:229.2px;top:50.5px;width:1px;height:16px;background:#b5b5b5"></div>
<svg class="a" style="left:196.5px;top:58px" width="5" height="3.5"><path d="M1 1 L2.5 2.5 L4 1" fill="none" stroke="#b0b0b0" stroke-width="1"/></svg>
<svg class="a" style="left:232.5px;top:58px" width="5" height="3.5"><path d="M1 1 L2.5 2.5 L4 1" fill="none" stroke="#b0b0b0" stroke-width="1"/></svg>
<div class="t ic" style="left:123.8px;top:71.2px;font-weight:bold;font-size:9.5px">B</div>
<div class="t ic" style="left:143.5px;top:70.6px;font-style:italic;font-family:'Liberation Serif',serif;font-size:10.5px">I</div>
<div class="t ic" style="left:159.5px;top:71.2px;text-decoration:underline;font-size:9.5px">U</div>
<div class="t ic" style="left:178px;top:71.2px;font-weight:bold;text-shadow:1px 1px 0 #ddd;font-size:9.5px">S</div>
<div class="t ic" style="left:192.8px;top:72.2px;font-size:8.5px;text-decoration:line-through;letter-spacing:-0.3px">abc</div>
<div class="t ic" style="left:211.5px;top:67px;font-size:9px">AV</div>
<svg class="a" style="left:211px;top:77px" width="13" height="5"><path d="M0.5 2.5 H12.5 M2.5 0.5 L0.5 2.5 L2.5 4.5 M10.5 0.5 L12.5 2.5 L10.5 4.5" fill="none" stroke="#b3b3b3" stroke-width="1"/></svg>
<svg class="a" style="left:228px;top:75px" width="6" height="4.2"><path d="M1 1 L3.0 3.2 L5 1" fill="none" stroke="#b3b3b3" stroke-width="1"/></svg>
<div class="t ic" style="left:123.3px;top:88.3px;font-size:11.5px">A</div>
<svg class="a" style="left:138.5px;top:92.5px" width="6" height="4.2"><path d="M1 1 L3.0 3.2 L5 1" fill="none" stroke="#b3b3b3" stroke-width="1"/></svg>
<div class="t ic" style="left:150px;top:87.5px;font-size:11px">Aa</div>
<svg class="a" style="left:166.5px;top:92.5px" width="6" height="4.2"><path d="M1 1 L3.0 3.2 L5 1" fill="none" stroke="#b3b3b3" stroke-width="1"/></svg>
<div class="bar" style="left:178.3px;top:86px;width:1px;height:15px;background:#d0d0d0"></div>
<div class="t ic" style="left:186.5px;top:88px;font-size:12px">A</div>
<div class="t ic" style="left:204.5px;top:89.5px;font-size:10px">A</div>
<svg class="a" style="left:194px;top:86px" width="4" height="3"><path d="M0 3 L2 0 L4 3Z" fill="#b3b3b3"/></svg>
<svg class="a" style="left:211px;top:86px" width="4" height="3"><path d="M0 0 L2 3 L4 0Z" fill="#b3b3b3"/></svg>
<div class="bar" style="left:219.5px;top:86px;width:1px;height:15px;background:#d0d0d0"></div>
<svg class="a" style="left:226px;top:86px" width="12" height="12"><path d="M5 10 L11 4 L8 1 L2 7 Z" fill="#c8c8c8"/><path d="M1 9 L3 11" stroke="#c8c8c8"/><text x="0" y="8" font-size="8" fill="#b8b8b8" font-family="Liberation Sans">A</text></svg>
<div id="w1_17" class="t rl" style="left:163.40px;top:106.80px;font-size:8.5px;letter-spacing:0.561px;">Font</div>
<svg class="a" style="left:237px;top:107.5px" width="6" height="6"><path d="M0.5 5.5 V0.5 H5.5 M1.5 1.5 L5.5 5.5 M3 5.5 H5.5 V3" fill="none" stroke="#bbb" stroke-width=".8"/></svg>
<svg class="a" style="left:253.9px;top:52.5px" width="12" height="12"><rect x="0.5" y="0.5" width="2" height="2" fill="#aaa"/><rect x="4.5" y="1.0" width="7" height="1" fill="#aaa"/><rect x="0.5" y="4.5" width="2" height="2" fill="#aaa"/><rect x="4.5" y="5.0" width="7" height="1" fill="#aaa"/><rect x="0.5" y="8.5" width="2" height="2" fill="#aaa"/><rect x="4.5" y="9.0" width="7" height="1" fill="#aaa"/></svg>
<svg class="a" style="left:271px;top:57px" width="6" height="4.2"><path d="M1 1 L3.0 3.2 L5 1" fill="none" stroke="#b3b3b3" stroke-width="1"/></svg>
<svg class="a" style="left:283.9px;top:52.5px" width="12" height="12"><rect x="0.5" y="0.5" width="2" height="2.5" fill="#c4c4c4"/><rect x="4.5" y="1.0" width="7" height="1" fill="#aaa"/><rect x="0.5" y="4.5" width="2" height="2.5" fill="#c4c4c4"/><rect x="4.5" y="5.0" width="7" height="1" fill="#aaa"/><rect x="0.5" y="8.5" width="2" height="2.5" fill="#c4c4c4"/><rect x="4.5" y="9.0" width="7" height="1" fill="#aaa"/></svg>
<svg class="a" style="left:300.5px;top:57px" width="6" height="4.2"><path d="M1 1 L3.0 3.2 L5 1" fill="none" stroke="#b3b3b3" stroke-width="1"/></svg>
<div class="bar" style="left:312px;top:51px;width:1px;height:15px;background:#d0d0d0"></div>
<svg class="a" style="left:318px;top:52px" width="12" height="12"><path d="M2 0.5 V11.5 M0.5 2.5 L2 0.5 L3.5 2.5 M0.5 9.5 L2 11.5 L3.5 9.5 M5 2.5 H11.5 M5 5 H11.5 M5 7.5 H11.5 M5 10 H11.5" fill="none" stroke="#aaa" stroke-width="1"/></svg>
<svg class="a" style="left:333.5px;top:57px" width="6" height="4.2"><path d="M1 1 L3.0 3.2 L5 1" fill="none" stroke="#b3b3b3" stroke-width="1"/></svg>
<svg class="a" style="left:344.5px;top:52px" width="12" height="12"><path d="M1 2 V11.5 M3.5 2 V11.5 M6 2 V11.5 M7.5 8 L9.5 1 L11.5 8 M8 6 H11" fill="none" stroke="#aaa" stroke-width="1"/></svg>
<svg class="a" style="left:361px;top:57px" width="6" height="4.2"><path d="M1 1 L3.0 3.2 L5 1" fill="none" stroke="#b3b3b3" stroke-width="1"/></svg>
<svg class="a" style="left:254px;top:70.5px" width="12" height="11"><path d="M0 0.5 H12 M5 3.5 H12 M5 6.5 H12 M0 9.5 H12" stroke="#aaa" stroke-width="1"/><path d="M0.5 5 H4 M2 3.5 L0.5 5 L2 6.5" fill="none" stroke="#999" stroke-width="1"/></svg>
<svg class="a" style="left:272px;top:70.5px" width="12" height="11"><path d="M0 0.5 H12 M5 3.5 H12 M5 6.5 H12 M0 9.5 H12" stroke="#aaa" stroke-width="1"/><path d="M0 5 H3.5 M2 3.5 L3.5 5 L2 6.5" fill="none" stroke="#999" stroke-width="1"/></svg>
<div class="bar" style="left:289.5px;top:68px;width:1px;height:15px;background:#d0d0d0"></div>
<svg class="a" style="left:296px;top:71px" width="11" height="9"><path d="M0 1 H4.5 M0 4 H4.5 M0 7 H4.5 M6 1 H10.5 M6 4 H10.5 M6 7 H10.5" stroke="#aaa" stroke-width="1"/></svg>
<svg class="a" style="left:311px;top:75px" width="6" height="4.2"><path d="M1 1 L3.0 3.2 L5 1" fill="none" stroke="#b3b3b3" stroke-width="1"/></svg>
<svg class="a" style="left:345px;top:70px" width="13" height="12"><path d="M2.5 0.5 H0.5 V11.5 H2.5 M10.5 0.5 H12.5 V11.5 H10.5 M6.5 1 V11 M4.5 3 L6.5 1 L8.5 3 M4.5 9 L6.5 11 L8.5 9" fill="none" stroke="#aaa" stroke-width="1"/><path d="M3 5 H10 M3 7 H10" stroke="#ccc" stroke-width=".8"/></svg>
<svg class="a" style="left:361px;top:75px" width="6" height="4.2"><path d="M1 1 L3.0 3.2 L5 1" fill="none" stroke="#b3b3b3" stroke-width="1"/></svg>
<svg class="a" style="left:254px;top:88.5px" width="12" height="9"><rect x="0" y="0.0" width="12" height="1" fill="#aaa"/><rect x="0" y="2.3" width="8" height="1" fill="#aaa"/><rect x="0" y="4.6" width="12" height="1" fill="#aaa"/><rect x="0" y="6.9" width="8" height="1" fill="#aaa"/></svg>
<svg class="a" style="left:272px;top:88.5px" width="12" height="9"><rect x="0" y="0.0" width="12" height="1" fill="#aaa"/><rect x="2" y="2.3" width="8" height="1" fill="#aaa"/><rect x="0" y="4.6" width="12" height="1" fill="#aaa"/><rect x="2" y="6.9" width="8" height="1" fill="#aaa"/></svg>
<svg class="a" style="left:290.5px;top:88.5px" width="12" height="9"><rect x="0" y="0.0" width="12" height="1" fill="#aaa"/><rect x="4" y="2.3" width="8" height="1" fill="#aaa"/><rect x="0" y="4.6" width="12" height="1" fill="#aaa"/><rect x="4" y="6.9" width="8" height="1" fill="#aaa"/></svg>
<svg class="a" style="left:308px;top:88.5px" width="12" height="9"><rect x="0" y="0.0" width="12" height="1" fill="#aaa"/><rect x="0" y="2.3" width="12" height="1" fill="#aaa"/><rect x="0" y="4.6" width="12" height="1" fill="#aaa"/><rect x="0" y="6.9" width="12" height="1" fill="#aaa"/></svg>
<svg class="a" style="left:345px;top:87px" width="13" height="13"><path d="M0.5 0.5 H8 L11 4 H3.5 Z" fill="#c8c8c8"/><rect x="4.5" y="5.5" width="8" height="7" fill="#f3f3f3" stroke="#aaa" stroke-width="1"/><path d="M6.5 8 H10.5 M6.5 10 H10.5" stroke="#bbb" stroke-width=".8"/></svg>
<svg class="a" style="left:361px;top:92px" width="6" height="4.2"><path d="M1 1 L3.0 3.2 L5 1" fill="none" stroke="#b3b3b3" stroke-width="1"/></svg>
<div id="w1_18" class="t rl" style="left:283.30px;top:106.80px;font-size:8.5px;letter-spacing:0.099px;">Paragraph</div>
<svg class="a" style="left:367px;top:107.5px" width="6" height="6"><path d="M0.5 5.5 V0.5 H5.5 M1.5 1.5 L5.5 5.5 M3 5.5 H5.5 V3" fill="none" stroke="#bbb" stroke-width=".8"/></svg>
<div class="ibox" style="left:386.1px;top:51px;width:23.7px;height:23.4px"></div>
<svg class="a" style="left:391px;top:55px" width="14" height="14"><rect x="1" y="1" width="6" height="6" fill="none" stroke="#2f6db5" stroke-width="1"/><circle cx="9.5" cy="8.5" r="3.5" fill="none" stroke="#2f6db5" stroke-width="1"/><text x="1" y="13.5" font-size="10" font-weight="bold" fill="#2f6db5" font-family="Liberation Sans">A</text></svg>
<div id="w1_19" class="t rl" style="left:381.40px;top:79.98px;font-size:9.0px;letter-spacing:0.031px;">Drawing</div>
<svg class="a" style="left:395.5px;top:92.7px" width="6" height="4.5"><path d="M1 1 L3.0 3.5 L5 1" fill="none" stroke="#666" stroke-width="1"/></svg>
<div class="ibox" style="left:429.7px;top:51px;width:23.7px;height:23.4px"></div>
<svg class="a" style="left:436px;top:57px" width="11" height="11"><circle cx="6.5" cy="4.5" r="3" fill="none" stroke="#2f6db5" stroke-width="1.5"/><path d="M4.5 6.5 L1 10" stroke="#2f6db5" stroke-width="2"/></svg>
<div id="w1_20" class="t rl" style="left:427.20px;top:79.98px;font-size:9.0px;letter-spacing:0.129px;">Editing</div>
<svg class="a" style="left:439px;top:92.7px" width="6" height="4.5"><path d="M1 1 L3.0 3.5 L5 1" fill="none" stroke="#666" stroke-width="1"/></svg>
<svg class="a" style="left:492.5px;top:107.5px" width="11" height="7"><path d="M0.5 6 L5.5 1 L10.5 6" fill="none" stroke="#666" stroke-width="1.1"/></svg>
</div>
<div class="ws" style="transform:translateX(0.5px)">
<div class="bar" style="left:0;top:117px;width:100%;height:1px;background:#d8d8d8"></div><div class="psep"></div>
<div class="thumb2"><div class="tin">
<div style="position:absolute;left:6px;top:3px;width:12px;height:1px;background:#b4bcdc"></div>
<div style="position:absolute;left:6px;top:6px;width:4px;height:1px;background:#7f90c0"></div>
<div style="position:absolute;left:21px;top:6px;width:4px;height:1px;background:#7f90c0"></div>
<div style="position:absolute;left:6px;top:8px;width:13px;height:5px;background:repeating-linear-gradient(#c4cbe2 0 0.8px,transparent 0.8px 1.8px)"></div>
<div style="position:absolute;left:21px;top:8px;width:13px;height:5px;background:repeating-linear-gradient(#c4cbe2 0 0.8px,transparent 0.8px 1.8px)"></div>
<div style="position:absolute;left:5px;top:0;width:1px;height:100%;background:#f6e0dc"></div>
</div></div>
<div class="insline"></div><div class="t pnum" style="left:9px;top:131px;color:#444">1</div>
<div class="slide" style="left:95.5px;top:175.0px;width:391px;height:293px">
<div class="fold"></div><div class="foldr"></div>
<svg style="position:absolute;left:0;top:0" width="391" height="293"><path d="M0 29.80 Q11.94 31.55 21.70 34.80" fill="none" stroke="rgb(125,204,224)" stroke-width="1.00"/><path d="M21.70 34.80 Q39.70 32.76 55.70 32.40 L391 32.40" fill="none" stroke="rgb(172,222,234)" stroke-width="0.95"/><path d="M0 48.84 Q11.94 50.48 21.70 53.51" fill="none" stroke="rgb(120,201,222)" stroke-width="1.03"/><path d="M21.70 53.51 Q39.70 51.59 55.70 51.25 L391 51.24" fill="none" stroke="rgb(160,216,230)" stroke-width="0.98"/><path d="M0 67.91 Q11.94 69.42 21.70 72.23" fill="none" stroke="rgb(116,199,221)" stroke-width="1.07"/><path d="M21.70 72.23 Q39.70 70.44 55.70 70.12 L391 70.07" fill="none" stroke="rgb(152,212,228)" stroke-width="1.01"/><path d="M0 87.00 Q11.94 88.39 21.70 90.98" fill="none" stroke="rgb(112,197,220)" stroke-width="1.10"/><path d="M21.70 90.98 Q39.70 89.31 55.70 89.02 L391 88.90" fill="none" stroke="rgb(145,208,227)" stroke-width="1.04"/><path d="M0 106.11 Q11.94 107.38 21.70 109.75" fill="none" stroke="rgb(108,195,219)" stroke-width="1.14"/><path d="M21.70 109.75 Q39.70 108.21 55.70 107.94 L391 107.73" fill="none" stroke="rgb(138,205,225)" stroke-width="1.07"/><path d="M0 125.24 Q11.94 126.40 21.70 128.55" fill="none" stroke="rgb(103,193,218)" stroke-width="1.17"/><path d="M21.70 128.55 Q39.70 127.13 55.70 126.88 L391 126.55" fill="none" stroke="rgb(132,202,223)" stroke-width="1.10"/><path d="M0 144.40 Q11.94 145.44 21.70 147.37" fill="none" stroke="rgb(99,191,217)" stroke-width="1.21"/><path d="M21.70 147.37 Q39.70 146.07 55.70 145.84 L391 145.37" fill="none" stroke="rgb(127,199,222)" stroke-width="1.13"/><path d="M0 163.57 Q11.94 164.50 21.70 166.21" fill="none" stroke="rgb(95,188,216)" stroke-width="1.24"/><path d="M21.70 166.21 Q39.70 165.04 55.70 164.83 L391 164.19" fill="none" stroke="rgb(121,196,220)" stroke-width="1.17"/><path d="M0 182.77 Q11.94 183.58 21.70 185.07" fill="none" stroke="rgb(91,186,215)" stroke-width="1.28"/><path d="M21.70 185.07 Q39.70 184.02 55.70 183.84 L391 183.00" fill="none" stroke="rgb(116,194,219)" stroke-width="1.20"/><path d="M0 202.00 Q11.94 202.68 21.70 203.95" fill="none" stroke="rgb(86,184,214)" stroke-width="1.31"/><path d="M21.70 203.95 Q39.70 203.03 55.70 202.87 L391 201.81" fill="none" stroke="rgb(111,191,218)" stroke-width="1.23"/><path d="M0 221.24 Q11.94 221.81 21.70 222.86" fill="none" stroke="rgb(82,182,213)" stroke-width="1.35"/><path d="M21.70 222.86 Q39.70 222.06 55.70 221.92 L391 220.62" fill="none" stroke="rgb(106,189,216)" stroke-width="1.26"/><path d="M0 240.51 Q11.94 240.96 21.70 241.79" fill="none" stroke="rgb(78,180,212)" stroke-width="1.38"/><path d="M21.70 241.79 Q39.70 241.11 55.70 240.99 L391 239.42" fill="none" stroke="rgb(101,186,215)" stroke-width="1.29"/><path d="M0 259.80 Q11.94 260.13 21.70 260.74" fill="none" stroke="rgb(74,178,211)" stroke-width="1.42"/><path d="M21.70 260.74 Q39.70 260.19 55.70 260.09 L391 258.22" fill="none" stroke="rgb(96,184,214)" stroke-width="1.32"/><path d="M0 279.11 Q11.94 279.32 21.70 279.71" fill="none" stroke="rgb(70,176,210)" stroke-width="1.45"/><path d="M21.70 279.71 Q39.70 279.29 55.70 279.21 L391 277.01" fill="none" stroke="rgb(92,182,213)" stroke-width="1.35"/>
<line x1="56.8" y1="0" x2="56.8" y2="293" stroke="#f5b8b2" stroke-width="1"/></svg>
<div class="redge"></div>
<div class="t snum" style="left:379px;top:17.3px">1</div>
<div id="w1_21" class="t h2t" style="left:60.80px;top:22.87px;font-size:17.4px;letter-spacing:1.087px;">Y<span style="font-size:15px">OU CAN ALSO SPLIT YOUR CONTENT</span></div><div id="w1_22" class="t colh" style="left:60.50px;top:58.27px;font-size:10.2px;letter-spacing:0.640px;">White</div><div id="w1_23" class="t colh" style="left:220.40px;top:58.27px;font-size:10.2px;letter-spacing:0.640px;">Black</div><div id="w1_24" class="t col" style="left:60.50px;top:72.67px;font-size:10.2px;letter-spacing:0.367px;">Is the color of milk and fresh</div><div id="w1_25" class="t col" style="left:60.50px;top:86.97px;font-size:10.2px;letter-spacing:0.367px;">snow, the color produced by</div><div id="w1_26" class="t col" style="left:60.50px;top:101.27px;font-size:10.2px;letter-spacing:0.367px;">the combination of all the</div><div id="w1_27" class="t col" style="left:60.50px;top:115.57px;font-size:10.2px;letter-spacing:0.367px;">colors of the visible spectrum.</div><div id="w1_28" class="t col" style="left:220.40px;top:72.67px;font-size:10.2px;letter-spacing:0.367px;">Is the color of ebony and of</div><div id="w1_29" class="t col" style="left:220.40px;top:86.97px;font-size:10.2px;letter-spacing:0.367px;">outer space. It has been the</div><div id="w1_30" class="t col" style="left:220.40px;top:101.27px;font-size:10.2px;letter-spacing:0.367px;">symbolic color of elegance,</div><div id="w1_31" class="t col" style="left:220.40px;top:115.57px;font-size:10.2px;letter-spacing:0.367px;">solemnity and authority.</div>
</div>
<div class="wsb"></div>
</div>
<div class="sb">
<div id="w1_32" class="t st" style="left:5.40px;top:533.62px;font-size:8.6px;letter-spacing:0.018px;">Slide 1 of 1</div>
<svg class="a" style="left:63px;top:531px" width="12" height="12"><path d="M0.5 0.5 H5.5 V10.5 H0.5 Z M5.5 0.5 H9" fill="none" stroke="#777" stroke-width="1"/><path d="M5.5 9 L11 3 L10 2 L6 6.5 Z" fill="none" stroke="#777" stroke-width=".9"/></svg>
<svg class="a" style="left:114.8px;top:532px" width="10" height="11"><path d="M2 3 L5 0.5 L8 3 Z" fill="#666"/><path d="M0 5 H9.5 M0 7.5 H9.5 M0 10 H9.5" stroke="#777" stroke-width="1"/></svg>
<div id="w1_33" class="t st" style="left:126.70px;top:533.72px;font-size:8.6px;letter-spacing:0.062px;">Notes</div>
<svg class="a" style="left:164.5px;top:532px" width="11" height="10"><path d="M0 0 H11 V7 H4 L2 10 V7 H0 Z" fill="#555"/></svg>
<div id="w1_34" class="t st" style="left:177.10px;top:533.72px;font-size:8.6px;letter-spacing:-0.136px;">Comments</div>
<div class="bar" style="left:232px;top:529px;width:30px;height:16.5px;background:#c6c6c6"></div>
<svg class="a" style="left:242px;top:532px" width="11" height="11"><rect x="0.5" y="0.5" width="10" height="10" fill="none" stroke="#666" stroke-width="1"/><path d="M2.5 0.5 V10.5 M2.5 8.5 H10.5" stroke="#666" stroke-width="1"/><rect x="5" y="2.5" width="3.5" height="2.5" fill="none" stroke="#666" stroke-width=".8"/></svg>
<svg class="a" style="left:272px;top:532px" width="11" height="11"><rect x="0.5" y="0.5" width="4" height="3.5" fill="none" stroke="#777" stroke-width="1"/><rect x="6.5" y="0.5" width="4" height="3.5" fill="none" stroke="#777" stroke-width="1"/><rect x="0.5" y="6.5" width="4" height="3.5" fill="none" stroke="#777" stroke-width="1"/><rect x="6.5" y="6.5" width="4" height="3.5" fill="none" stroke="#777" stroke-width="1"/></svg>
<svg class="a" style="left:302px;top:532px" width="11" height="11"><path d="M0.5 1.5 L5 0.5 V10 L0.5 11 Z M5.5 0.5 L10 1.5 V11 L5.5 10 Z" fill="#e6e6e6" stroke="#777" stroke-width="1"/></svg>
<svg class="a" style="left:331.5px;top:532px" width="11" height="11"><path d="M0 0.5 H11 M1 1 H10 V6 H1 Z M5.5 6 V9 M3 10.5 H8" fill="none" stroke="#777" stroke-width="1"/></svg>
<div class="bar" style="left:357px;top:536.5px;width:6px;height:1px;background:#666"></div>
<div class="bar" style="left:367px;top:536.5px;width:74.5px;height:1px;background:#777"></div>
<div class="bar" style="left:404px;top:534px;width:1px;height:6px;background:#777"></div>
<div class="bar" style="left:384.5px;top:533.5px;width:4px;height:8px;background:#666"></div>
<svg class="a" style="left:445.5px;top:533.5px" width="7" height="7"><path d="M0 3.5 H6 M3 0.5 V6.5" stroke="#666" stroke-width="1"/></svg>
<div id="w1_35" class="t st" style="left:460.70px;top:533.72px;font-size:8.6px;letter-spacing:-0.303px;">55%</div>
<svg class="a" style="left:487px;top:532px" width="10" height="10"><rect x="0.5" y="0.5" width="9" height="9" fill="none" stroke="#777" stroke-width="1"/><path d="M2 2 L4 4 M8 2 L6 4 M2 8 L4 6 M8 8 L6 6" stroke="#777" stroke-width="1"/></svg>
</div>
</div>
<div class="bar" style="left:1022px;top:0;width:1px;height:546px;background:#c98a78"></div>
<div class="bar" style="left:511px;top:545px;width:512px;height:1px;background:#d98a73"></div>
<div class="bar" style="left:1023px;top:0;width:1px;height:547px;background:#8a8a8a"></div>
<div class="bar" style="left:34px;top:546px;width:259px;height:1px;background:#a8a8a8"></div>
<svg style="position:absolute;left:0;top:0" width="1024" height="547">
<defs>
<linearGradient id="sg" x1="0" y1="228" x2="0" y2="319" gradientUnits="userSpaceOnUse">
<stop offset="0" stop-color="#f3465c"/>
<stop offset="0.187" stop-color="#ea4a80"/>
<stop offset="0.418" stop-color="#cc5fc6"/>
<stop offset="0.571" stop-color="#9c76e8"/>
<stop offset="0.736" stop-color="#6a90f0"/>
<stop offset="1" stop-color="#1ac4e6"/>
</linearGradient>
<mask id="sm" maskUnits="userSpaceOnUse" x="0" y="0" width="1024" height="547">
<g fill="none" stroke-linecap="round" stroke-linejoin="round">
<path d="M473.8 236.8 L474.8 262.0 L499.6 253.8 M476.35 261.32 A37.8 37.8 0 0 1 549.13 264.50" stroke="#fff" stroke-width="12.6"/>
<path d="M473.8 236.8 L474.8 262.0 L499.6 253.8 M476.35 261.32 A37.8 37.8 0 0 1 549.13 264.50" stroke="#000" stroke-width="8.2"/>
</g>
<g transform="rotate(180 512.3 273.1)" fill="none" stroke-linecap="round" stroke-linejoin="round">
<path d="M473.8 236.8 L474.8 262.0 L499.6 253.8 M476.35 261.32 A37.8 37.8 0 0 1 549.13 264.50" stroke="#fff" stroke-width="12.6"/>
<path d="M473.8 236.8 L474.8 262.0 L499.6 253.8 M476.35 261.32 A37.8 37.8 0 0 1 549.13 264.50" stroke="#000" stroke-width="8.2"/>
</g>
</mask>
</defs>
<rect x="440" y="200" width="150" height="150" fill="url(#sg)" mask="url(#sm)"/>
</svg>
</body></html>
